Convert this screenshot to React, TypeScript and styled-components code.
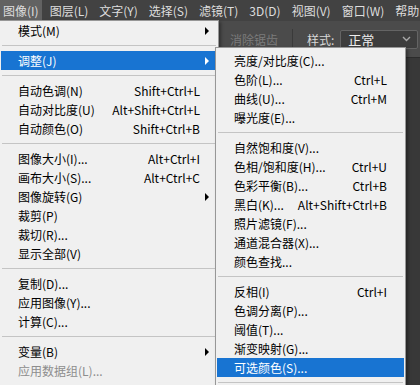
import { FC } from 'react';
import styled, { createGlobalStyle } from 'styled-components';

type Entry =
  | 'sep'
  | { label: string; shortcut?: string; sub?: boolean; disabled?: boolean; active?: boolean };

const MENUBAR = ['图像(I)', '图层(L)', '文字(Y)', '选择(S)', '滤镜(T)', '3D(D)', '视图(V)', '窗口(W)', '帮助'];

const IMAGE_MENU: Entry[] = [
  { label: '模式(M)', sub: true },
  'sep',
  { label: '调整(J)', sub: true, active: true },
  'sep',
  { label: '自动色调(N)', shortcut: 'Shift+Ctrl+L' },
  { label: '自动对比度(U)', shortcut: 'Alt+Shift+Ctrl+L' },
  { label: '自动颜色(O)', shortcut: 'Shift+Ctrl+B' },
  'sep',
  { label: '图像大小(I)...', shortcut: 'Alt+Ctrl+I' },
  { label: '画布大小(S)...', shortcut: 'Alt+Ctrl+C' },
  { label: '图像旋转(G)', sub: true },
  { label: '裁剪(P)' },
  { label: '裁切(R)...' },
  { label: '显示全部(V)' },
  'sep',
  { label: '复制(D)...' },
  { label: '应用图像(Y)...' },
  { label: '计算(C)...' },
  'sep',
  { label: '变量(B)', sub: true },
  { label: '应用数据组(L)...', disabled: true },
  'sep',
];

const ADJUST_MENU: Entry[] = [
  { label: '亮度/对比度(C)...' },
  { label: '色阶(L)...', shortcut: 'Ctrl+L' },
  { label: '曲线(U)...', shortcut: 'Ctrl+M' },
  { label: '曝光度(E)...' },
  'sep',
  { label: '自然饱和度(V)...' },
  { label: '色相/饱和度(H)...', shortcut: 'Ctrl+U' },
  { label: '色彩平衡(B)...', shortcut: 'Ctrl+B' },
  { label: '黑白(K)...', shortcut: 'Alt+Shift+Ctrl+B' },
  { label: '照片滤镜(F)...' },
  { label: '通道混合器(X)...' },
  { label: '颜色查找...' },
  'sep',
  { label: '反相(I)', shortcut: 'Ctrl+I' },
  { label: '色调分离(P)...' },
  { label: '阈值(T)...' },
  { label: '渐变映射(G)...' },
  { label: '可选颜色(S)...', active: true },
  'sep',
];

const MenuList: FC<{ items: Entry[] }> = ({ items }) => (
  <>
    {items.map((item, i) =>
      item === 'sep' ? (
        <Separator key={i} />
      ) : (
        <Row key={i} $active={item.active} $disabled={item.disabled}>
          <span>{item.label}</span>
          <Shortcut>{item.shortcut}</Shortcut>
          <ArrowCell>{item.sub && <Arrow $active={item.active} />}</ArrowCell>
        </Row>
      ),
    )}
  </>
);

export default function App() {
  return (
    <Root>
      <GlobalStyle />
      <MenuBar>
        {MENUBAR.map((m, i) => (
          <MenuBarItem key={m} $open={i === 0}>
            {m}
          </MenuBarItem>
        ))}
      </MenuBar>
      <OptionsBar>
        <DisabledLabel>消除锯齿</DisabledLabel>
        <Divider />
        <OptionLabel>样式:</OptionLabel>
        <Select>
          正常
          <svg width="9" height="6" viewBox="0 0 9 6">
            <path d="M1 1l3.5 3.5L8 1" fill="none" stroke="#a8a8a8" strokeWidth="1.4" />
          </svg>
        </Select>
      </OptionsBar>
      <Workspace />

      <MainMenu>
        <MenuList items={IMAGE_MENU} />
      </MainMenu>
      <SubMenu>
        <MenuList items={ADJUST_MENU} />
      </SubMenu>
    </Root>
  );
}

const GlobalStyle = createGlobalStyle`
  html, body {
    margin: 0;
    padding: 0;
  }
  body {
    background: #383838;
    font-family: "Noto Sans CJK SC", "Noto Sans", sans-serif;
    overflow: hidden;
  }
`;

const Root = styled.div`
  position: relative;
  width: 420px;
  height: 385px;
  overflow: hidden;
  display: flex;
  flex-direction: column;
  background: #383838;
`;

const MenuBar = styled.div`
  height: 21px;
  display: flex;
  align-items: stretch;
  gap: 5px;
  background: #424242;
  flex-shrink: 0;
  overflow: hidden;
`;

const MenuBarItem = styled.div<{ $open?: boolean }>`
  display: flex;
  align-items: center;
  padding: 0 3px;
  font-size: 12px;
  color: #dedede;
  white-space: nowrap;
  background: ${(p) => (p.$open ? '#626262' : 'transparent')};
`;

const OptionsBar = styled.div`
  height: 37px;
  flex-shrink: 0;
  display: flex;
  align-items: center;
  padding-left: 230px;
  background: #4b4b4b;
  border-bottom: 1px solid #2c2c2c;
  box-sizing: border-box;
`;

const DisabledLabel = styled.span`
  font-size: 12px;
  color: #7b7b7b;
`;

const Divider = styled.span`
  width: 1px;
  height: 20px;
  margin: 0 14px;
  background: #3a3a3a;
`;

const OptionLabel = styled.span`
  font-size: 12px;
  color: #d8d8d8;
  margin-right: 6px;
`;

const Select = styled.div`
  width: 78px;
  height: 19px;
  flex-shrink: 0;
  box-sizing: border-box;
  display: flex;
  align-items: center;
  justify-content: space-between;
  padding: 0 6px 0 7px;
  background: #3d3d3d;
  border: 1px solid #646464;
  border-radius: 2px;
  font-size: 13px;
  color: #eeeeee;
`;

const Workspace = styled.div`
  flex: 1;
  background: #383838;
`;

const MenuPanel = styled.div`
  position: absolute;
  box-sizing: border-box;
  background: #f0f0f0;
  border: 1px solid #979797;
  box-shadow: 2px 2px 3px rgba(0, 0, 0, 0.35);
  padding: 0 1px;
  font-size: 12px;
  color: #000;
`;

const MainMenu = styled(MenuPanel)`
  top: 20px;
  left: -1px;
  width: 220px;
`;

const SubMenu = styled(MenuPanel)`
  top: 47px;
  left: 215px;
  width: 191px;
  padding-top: 3px;
`;

const Row = styled.div<{ $active?: boolean; $disabled?: boolean }>`
  height: 19px;
  display: grid;
  grid-template-columns: 1fr auto 17px;
  align-items: center;
  padding-left: 17px;
  white-space: nowrap;
  line-height: 19px;
  background: ${(p) => (p.$active ? '#1874d2' : 'transparent')};
  color: ${(p) => (p.$active ? '#ffffff' : p.$disabled ? '#8d8d8d' : '#000000')};
`;

const Shortcut = styled.span`
  text-align: right;
`;

const ArrowCell = styled.span`
  display: flex;
  align-items: center;
  padding-left: 5px;
`;

const Arrow = styled.i<{ $active?: boolean }>`
  width: 0;
  height: 0;
  border-top: 4px solid transparent;
  border-bottom: 4px solid transparent;
  border-left: 4px solid ${(p) => (p.$active ? '#ffffff' : '#000000')};
`;

const Separator = styled.div`
  height: 11px;
  display: flex;
  align-items: center;
  padding: 0 1px;

  &::after {
    content: '';
    flex: 1;
    height: 1px;
    background: #c4c4c4;
  }
`;
